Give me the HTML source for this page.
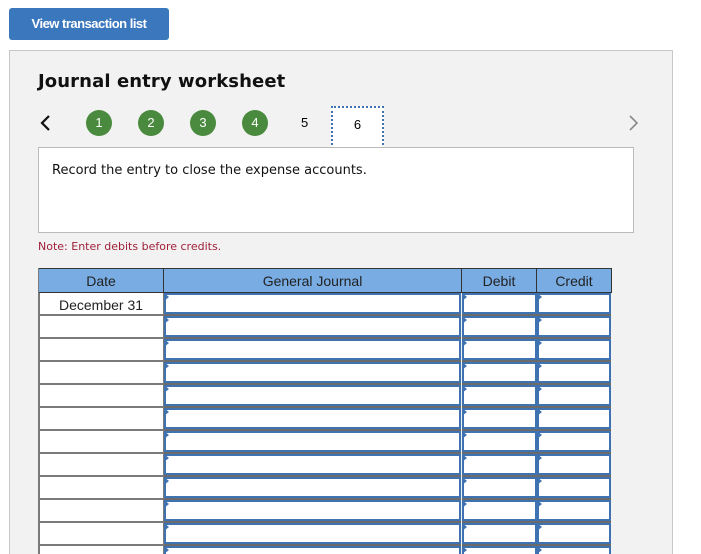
<!DOCTYPE html>
<html style="height:554px;overflow:hidden"><head><meta charset="utf-8"><style>
*{box-sizing:border-box;margin:0;padding:0}
body{width:701px;height:554px;overflow:hidden;background:#fff;font-family:"Liberation Sans",Arial,sans-serif;position:relative}
.a{position:absolute}
.btn{left:9px;top:8px;width:160px;height:32px;background:#3b77bc;border-radius:3px;color:#fff;font-weight:bold;font-size:13px;line-height:32px;text-align:center;letter-spacing:-0.5px}
.panel{left:9px;top:50px;width:664px;height:510px;background:#f2f2f2;border:1px solid #c8c8c8}
h1{position:absolute;left:38px;top:71px;font-family:"DejaVu Sans",sans-serif;font-size:18px;font-weight:bold;color:#111;letter-spacing:0.1px}
.c{width:26px;height:26px;border-radius:50%;background:#4a8a3e;color:#fff;font-size:13px;text-align:center;line-height:26px;top:110px}
.box{left:38px;top:147px;width:596px;height:86px;background:#fff;border:1px solid #bbb;font-family:"DejaVu Sans",sans-serif;font-size:13px;color:#111;padding:15px 13px}
.note{left:38px;top:240px;font-family:"DejaVu Sans",sans-serif;font-size:11px;color:#a0203a}
.hd{top:268px;height:25px;background:#78ace2;border:1px solid #333;border-left:none;font-size:14px;color:#222;text-align:center;line-height:24px}
.ln{height:2px;background:#7a7a7a}
.inp{background:#fff;border:2px solid #3f72b0;height:21px}
.tri{width:0;height:0;border-top:4px solid transparent;border-bottom:4px solid transparent;border-left:5px solid #3f72b0}
</style></head><body>
<div class="a btn">View transaction list</div>
<div class="a panel"></div>
<h1>Journal entry worksheet</h1>
<svg class="a" style="left:39px;top:114px" width="12" height="18"><path d="M10 2 L3 9 L10 16" stroke="#111" stroke-width="2.2" fill="none"/></svg>
<svg class="a" style="left:628px;top:114px" width="12" height="18"><path d="M2 2 L9 9 L2 16" stroke="#888" stroke-width="1.6" fill="none"/></svg>
<div class="a c" style="left:86px">1</div>
<div class="a c" style="left:138px">2</div>
<div class="a c" style="left:190px">3</div>
<div class="a c" style="left:242px">4</div>
<div class="a" style="left:301px;top:115px;font-size:13px">5</div>
<div class="a" style="left:331px;top:106px;width:53px;height:43px;background:#fff;border:2px dotted #3f72b0;text-align:center;line-height:34px;font-size:13px">6</div>
<div class="a box">Record the entry to close the expense accounts.</div>
<div class="a note">Note: Enter debits before credits.</div>
<div class="a" style="left:38px;top:268px;width:126px;height:300px;border-left:2px solid #7a7a7a;background:#fff"></div>
<div class="a hd" style="left:39px;width:125px;border-left:none">Date</div>
<div class="a hd" style="left:163px;width:299px;border-left:1px solid #333">General Journal</div>
<div class="a hd" style="left:461px;width:76px;border-left:1px solid #333">Debit</div>
<div class="a hd" style="left:536px;width:76px;border-left:1px solid #333">Credit</div>
<div class="a" style="left:40px;top:297px;width:122px;text-align:center;font-size:14px;color:#222">December 31</div>
<div id="rows"></div>
<script>
var h='';
for(var i=0;i<12;i++){var y=293+i*23;
h+='<div class="a" style="left:40px;top:'+(y+21)+'px;width:124px" ><div class="ln"></div></div>';
h+='<div class="a" style="left:163px;top:'+y+'px;width:2px;height:23px;background:#7a7a7a"></div>';
[[164,297],[462,75],[537,74]].forEach(function(c){
h+='<div class="a inp" style="left:'+c[0]+'px;top:'+y+'px;width:'+c[1]+'px"></div>';
h+='<div class="a" style="left:'+c[0]+'px;top:'+(y+21)+'px;width:'+c[1]+'px;height:2px;background:#6b6b6b"></div>';
h+='<div class="a tri" style="left:'+c[0]+'px;top:'+y+'px"></div>';});
}
document.getElementById('rows').innerHTML=h;
</script>
</body></html>
